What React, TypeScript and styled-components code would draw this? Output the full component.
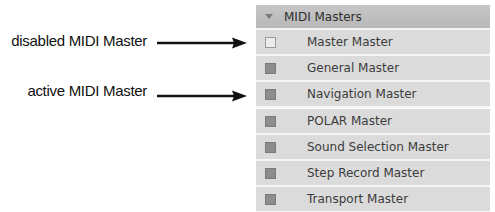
import { Fragment } from "react";
import styled, { createGlobalStyle } from "styled-components";

const GlobalStyle = createGlobalStyle`
  html, body {
    margin: 0;
    padding: 0;
    background: #ffffff;
  }
`;

const Page = styled.div`
  display: grid;
  grid-template-columns: 256px 234px;
  padding-top: 5px;
`;

const Note = styled.div`
  display: flex;
  align-items: center;
  justify-content: flex-end;
  gap: 10px;
  padding-right: 9px;
`;

const NoteText = styled.span<{ $lift: number }>`
  font-family: "Liberation Sans", Arial, sans-serif;
  font-size: 15px;
  letter-spacing: -0.3px;
  color: #111;
  margin-bottom: ${(p) => p.$lift}px;
`;

const Header = styled.div`
  height: 23px;
  display: flex;
  align-items: center;
  background: linear-gradient(#c6c6c6, #b8b8b8);
  border-bottom: 2px solid #f4f4f4;
  font-family: "DejaVu Sans", Verdana, sans-serif;
  font-size: 12px;
  color: #2e2e2e;
`;

const Triangle = styled.span`
  width: 0;
  height: 0;
  margin: 0 11px 0 9px;
  border-left: 4px solid transparent;
  border-right: 4px solid transparent;
  border-top: 5px solid #7a7a7a;
`;

const Item = styled.div`
  height: 24px;
  display: flex;
  align-items: center;
  background: #dbdbdb;
  border-bottom: 2px solid #f6f6f6;
  font-family: "DejaVu Sans", Verdana, sans-serif;
  font-size: 12px;
  color: #3c3c3c;
`;

const Box = styled.span<{ $disabled?: boolean }>`
  box-sizing: border-box;
  width: 11px;
  height: 11px;
  margin: 0 31px 0 9px;
  background: ${(p) => (p.$disabled ? "#ececec" : "#8d8d8d")};
  border: 1px solid ${(p) => (p.$disabled ? "#9a9a9a" : "#7a7a7a")};
`;

function Arrow() {
  return (
    <svg width="90" height="12" viewBox="0 0 90 12">
      <line x1="0" y1="6" x2="78" y2="6" stroke="#111" strokeWidth="2.4" />
      <polygon points="75,0.5 90,6 75,11.5 77,6" fill="#111" />
    </svg>
  );
}

const masters = [
  { name: "Master Master", disabled: true, note: "disabled MIDI Master", lift: 6 },
  { name: "General Master" },
  { name: "Navigation Master", note: "active MIDI Master", lift: 10 },
  { name: "POLAR Master" },
  { name: "Sound Selection Master" },
  { name: "Step Record Master" },
  { name: "Transport Master" },
];

export default function App() {
  return (
    <>
      <GlobalStyle />
      <Page>
        <div />
        <Header>
          <Triangle />
          MIDI Masters
        </Header>
        {masters.map((m) => (
          <Fragment key={m.name}>
            <Note>
              {m.note && (
                <>
                  <NoteText $lift={m.lift ?? 0}>{m.note}</NoteText>
                  <Arrow />
                </>
              )}
            </Note>
            <Item>
              <Box $disabled={m.disabled} />
              {m.name}
            </Item>
          </Fragment>
        ))}
      </Page>
    </>
  );
}
